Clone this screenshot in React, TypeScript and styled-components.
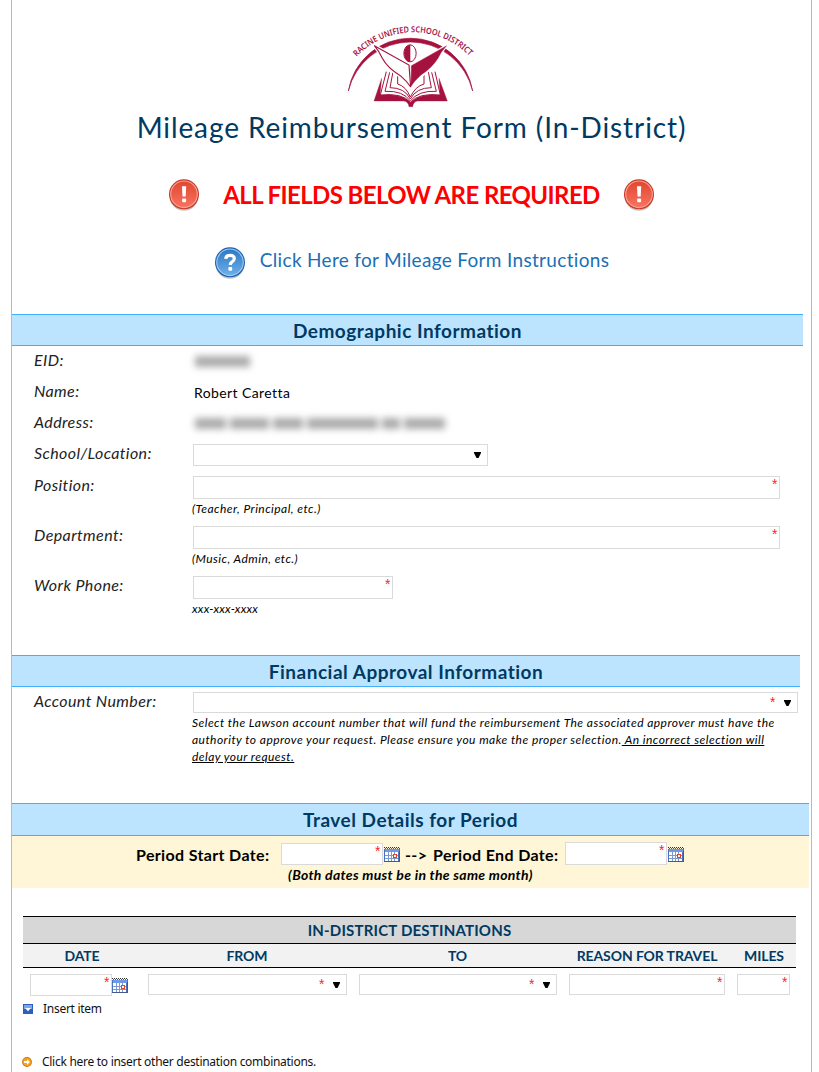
import React from 'react';
import styled, { createGlobalStyle } from 'styled-components';

const GlobalStyle = createGlobalStyle`
  *, *::before, *::after { box-sizing: border-box; }
  body { margin: 0; background: #fff; font-family: Lato, "Liberation Sans", sans-serif; color: #000; overflow: hidden; }
  svg { display: block; flex: none; }
`;

const Page = styled.main`
  width: 801px;
  height: 1072px;
  margin-left: 11px;
  border: solid #bababa;
  border-width: 0 1px;
  overflow: hidden;
`;

const Header = styled.header`
  display: flex;
  flex-direction: column;
  align-items: center;
  height: 314px;
  padding-top: 15px;
`;

const Title = styled.h1`
  margin: -7px 0 0;
  height: 38px;
  line-height: 38px;
  font-size: 28px;
  font-weight: 400;
  letter-spacing: 0.9px;
  color: #003a63;
  white-space: nowrap;
`;

const Notice = styled.div`
  display: flex;
  align-items: center;
  gap: 23px;
  height: 36px;
  margin-top: 31px;
`;

const NoticeText = styled.strong`
  font-size: 24px;
  line-height: 30px;
  font-weight: 700;
  letter-spacing: -0.6px;
  color: #f00;
  white-space: nowrap;
`;

const HelpLink = styled.a`
  display: flex;
  align-items: center;
  gap: 14px;
  height: 36px;
  margin-top: 32px;
  font-size: 19px;
  letter-spacing: 0.32px;
  color: #1a6fb5;
  white-space: nowrap;
  span { margin-top: -7px; }
`;

const SectionBar = styled.h2<{ $width: number; $height?: number }>`
  display: flex;
  align-items: center;
  justify-content: center;
  width: ${p => p.$width}px;
  height: ${p => p.$height ?? 32}px;
  margin: 0;
  border: solid #42b0f8;
  border-width: 1px 0;
  background: #bde4ff;
  color: #003a63;
  font-size: 19px;
  font-weight: 700;
  letter-spacing: 0.5px;
`;

const Fields = styled.div<{ $height: number }>`
  height: ${p => p.$height}px;
`;

const Row = styled.div<{ $height: number }>`
  display: grid;
  grid-template-columns: 159px 1fr;
  height: ${p => p.$height}px;
  padding-left: 22px;
`;

const Label = styled.label`
  height: 28px;
  line-height: 28px;
  font-size: 16px;
  font-style: italic;
  letter-spacing: 0.4px;
  color: #222;
  white-space: nowrap;
`;

const Value = styled.div`
  padding-left: 1px;
  line-height: 32px;
  font-size: 14px;
  letter-spacing: 0.4px;
`;

const Redacted = styled.div`
  display: flex;
  gap: 4px;
  padding: 10px 0 0 2px;
  filter: blur(3.5px);
`;

const Smudge = styled.i<{ $w: number }>`
  width: ${p => p.$w}px;
  height: 11px;
  background: #aaa;
`;

const FieldCell = styled.div`
  padding-top: 5px;
`;

const Box = styled.div<{ $w: number; $h: number; $select?: boolean; $top: number }>`
  display: flex;
  flex: none;
  justify-content: flex-end;
  align-items: ${p => (p.$select ? 'center' : 'flex-start')};
  gap: 8px;
  width: ${p => p.$w}px;
  height: ${p => p.$h}px;
  margin-top: ${p => p.$top}px;
  padding-right: ${p => (p.$select ? 6 : 1)}px;
  border: 1px solid #dadada;
  background: #fff;
`;

const Star = styled.span`
  width: 6px;
  height: 16px;
  font: 14px/14px "Liberation Sans", sans-serif;
  color: #f22;
`;

const Hint = styled.div<{ $spacing?: number }>`
  margin: 1px 0 0 -1px;
  line-height: 17px;
  font-size: 12px;
  font-style: italic;
  letter-spacing: ${p => p.$spacing ?? 0.46}px;
  white-space: nowrap;
`;

const Period = styled.section`
  width: 797px;
  height: 52px;
  background: #fef6d6;
`;

const PeriodLine = styled.div`
  display: flex;
  align-items: flex-start;
  height: 30px;
  padding: 6px 0 0 124px;
`;

const PeriodText = styled.strong<{ $w: number }>`
  flex: none;
  width: ${p => p.$w}px;
  line-height: 26px;
  font-size: 16px;
  letter-spacing: 0.35px;
  white-space: nowrap;
`;

const IconSlot = styled.span<{ $w: number; $top: number; $left?: number }>`
  flex: none;
  width: ${p => p.$w}px;
  padding: ${p => p.$top}px 0 0 ${p => p.$left ?? 0}px;
`;

const PeriodNote = styled.div`
  text-align: center;
  line-height: 18px;
  font-size: 14px;
  font-weight: 700;
  font-style: italic;
  letter-spacing: 0.3px;
`;

const Table = styled.section`
  width: 773px;
  margin: 28px 0 0 11px;
`;

const TableTitle = styled.div`
  height: 28px;
  border: solid #000;
  border-width: 1px 0;
  background: #d7d7d7;
  color: #003a63;
  text-align: center;
  font-size: 15px;
  line-height: 26px;
  font-weight: 700;
  letter-spacing: 0.2px;
`;

const HeadRow = styled.div`
  display: grid;
  grid-template-columns: 118px 212px 209px 170px 64px;
  height: 24px;
  border-bottom: 1px solid #000;
  background: #f2f2f2;
  color: #003a63;
  text-align: center;
  font-size: 14px;
  line-height: 24px;
  font-weight: 700;
  letter-spacing: -0.1px;
`;

const EntryRow = styled.div`
  display: flex;
  align-items: flex-start;
  height: 30px;
  padding: 6px 0 0 7px;
`;

const Gap = styled.span`
  flex: none;
  width: 12px;
`;

const Action = styled.a<{ $gap: number; $top: number; $indent: number }>`
  display: flex;
  align-items: center;
  gap: ${p => p.$gap}px;
  height: 16px;
  margin: ${p => p.$top}px 0 0 ${p => p.$indent}px;
  font-family: "Noto Sans", sans-serif;
  font-size: 12px;
  letter-spacing: -0.28px;
  color: #111;
  white-space: nowrap;
  span { margin-top: -2px; }
`;

const Logo = () => (
  <svg width="145" height="100" viewBox="0 0 435 300" fill="none" stroke="#a6123f">
    <path id="ring" d="M53 125A234 234 0 0 1 394 126" stroke="none" />
    <text fill="#a6123f" stroke="none" fontFamily="Noto Sans" fontSize="25" fontWeight="600">
      <textPath href="#ring" textLength="378" lengthAdjust="spacingAndGlyphs">RACINE UNIFIED SCHOOL DISTRICT</textPath>
    </text>
    <path d="M28 228A189 189 0 0 1 401 228A191.8 191.8 0 0 0 28 228Z" fill="#a6123f" strokeWidth="2" />
    <path d="M136 168L105 258H194Q209 260 215 277Q221 260 236 258H325L294 168L214 235Z" fill="#fff" stroke="#fff" strokeWidth="8" />
    <path d="M128 190L105 258H194Q208 260 210 275H221Q223 260 236 258H325L300 190L303 240Q240 234 216 262Q190 234 123 240Z" fill="#a6123f" strokeWidth="1" />
    <path d="M142 170L124 240Q190 233 214 262Q240 233 304 240L288 170" fill="#fff" strokeWidth="3" />
    <path d="M152 172L138 229Q192 226 214 258Q238 226 292 229L278 172M162 170L153 218Q197 218 214 252Q232 218 277 218L268 170" strokeWidth="3" />
    <path d="M176 178V207Q201 214 214 246Q229 214 255 207V178" fill="#fff" strokeWidth="3" />
    <path d="M104 91L208 148L215 218Q204 200 184 183Q146 160 130 130Q120 105 104 91Z" fill="#fff" stroke="#fff" strokeWidth="11" />
    <path d="M325 91L220 148L215 218Q226 200 246 183Q280 162 299 130Q309 105 325 91Z" fill="#a6123f" stroke="#fff" strokeWidth="8" />
    <path d="M106 92L210 150L215 216Q204 199 184 182Q146 160 130 130Q120 108 106 92Z" fill="#fff" strokeWidth="3.5" />
    <path d="M323 92L217 152L216 214Q226 198 246 180Q278 160 297 130Q307 108 323 92Z" fill="#a6123f" strokeWidth="1" />
    <ellipse cx="213" cy="115" rx="18.5" ry="25.5" fill="#fff" strokeWidth="3" />
    <path d="M214 89A19 26 0 0 0 214 141Z" fill="#a6123f" stroke="none" />
  </svg>
);

const Badge = ({ kind }: { kind: 'alert' | 'help' }) => {
  const alert = kind === 'alert';
  const id = `badge-${kind}`;
  return (
    <svg width="32" height="34" viewBox="0 0 32 34">
      <defs>
        <linearGradient id={id} x1="0" y1="0" x2="0" y2="1">
          <stop offset="0" stopColor={alert ? '#e2462f' : '#2e78c4'} />
          <stop offset="1" stopColor={alert ? '#f77460' : '#6db0e8'} />
        </linearGradient>
      </defs>
      <ellipse cx="16" cy="18" rx="14.5" ry="14.8" fill="#777" opacity=".45" />
      <circle cx="16" cy="16.3" r="15" fill={alert ? '#c73826' : '#1c5fae'} />
      <circle cx="16" cy="16.3" r="13.3" fill={`url(#${id})`} stroke={alert ? '#f7a697' : '#a3cef2'} strokeWidth="1.1" />
      {alert ? (
        <>
          <path d="M14 8.2h4.2l-.5 10.4h-3.2Z" fill="#fff" />
          <rect x="14.1" y="20.5" width="4" height="3.8" rx="1" fill="#fff" />
        </>
      ) : (
        <>
          <path d="M11.7 12.8Q12 9.4 16 9.4Q20.4 9.4 20.3 12.8Q20.2 14.8 17.8 16.1Q16.3 17 16.3 19" fill="none" stroke="#fff" strokeWidth="3.2" />
          <rect x="14.4" y="21" width="3.8" height="3.7" rx="1" fill="#fff" />
        </>
      )}
    </svg>
  );
};

const Calendar = () => (
  <svg width="16" height="15" viewBox="0 0 16 15" shapeRendering="crispEdges">
    <rect y="2" width="16" height="13" fill="#4a72bd" />
    <rect x="1" y="5" width="13" height="9" fill="#fff" />
    <rect x="1" y="2" width="14" height="3" fill="#6f98e6" />
    <path d="M0 .5H16" stroke="#333" strokeDasharray="1 1" />
    <path d="M1 1.5H16" stroke="#555" strokeDasharray="1 1" />
    <path d="M4.5 5V14M7.5 5V14M10.5 5V14M1 8.5H14M1 11.5H14" stroke="#7c9ad2" />
    <rect x="9.5" y="7.5" width="3" height="3" fill="#fff" stroke="#e8401c" />
    <path d="M15.5 4V15M0 14.5H16" stroke="#45598a" />
  </svg>
);

const Arrow = () => (
  <svg width="7" height="6" viewBox="0 0 7 6"><path d="M0 0H7V1L4.5 6H2.5L0 1Z" fill="#000" /></svg>
);

const InsertIcon = () => (
  <svg width="10" height="10" viewBox="0 0 10 10">
    <rect width="10" height="10" fill="#2c5fc0" />
    <rect x="1" y="1" width="8" height="4" fill="#7da5e8" />
    <path d="M2 4H8L5 7.2Z" fill="#fff" />
  </svg>
);

const GoIcon = () => (
  <svg width="10" height="10" viewBox="0 0 10 10">
    <circle cx="5" cy="5" r="4.9" fill="#c87512" />
    <circle cx="5" cy="5" r="4" fill="#f5a01e" />
    <path d="M2 4H5V2.2L8 5L5 7.8V6H2Z" fill="#fff" />
  </svg>
);

type InputProps = { w: number; h: number; top?: number; select?: boolean; required?: boolean };

const Input = ({ w, h, top = 0, select, required = true }: InputProps) => (
  <Box $w={w} $h={h} $top={top} $select={select}>
    {required && <Star>*</Star>}
    {select && <Arrow />}
  </Box>
);

export default function App() {
  return (
    <>
      <GlobalStyle />
      <Page>
        <Header>
          <Logo />
          <Title>Mileage Reimbursement Form (In-District)</Title>
          <Notice>
            <Badge kind="alert" />
            <NoticeText>ALL FIELDS BELOW ARE REQUIRED</NoticeText>
            <Badge kind="alert" />
          </Notice>
          <HelpLink>
            <Badge kind="help" />
            <span>Click Here for Mileage Form Instructions</span>
          </HelpLink>
        </Header>

        <SectionBar $width={791}>Demographic Information</SectionBar>
        <Fields $height={309}>
          <Row $height={31}>
            <Label>EID:</Label>
            <Redacted><Smudge $w={55} /></Redacted>
          </Row>
          <Row $height={31}>
            <Label>Name:</Label>
            <Value>Robert Caretta</Value>
          </Row>
          <Row $height={31}>
            <Label>Address:</Label>
            <Redacted>
              <Smudge $w={31} /><Smudge $w={39} /><Smudge $w={30} /><Smudge $w={71} /><Smudge $w={18} /><Smudge $w={41} />
            </Redacted>
          </Row>
          <Row $height={32}>
            <Label>School/Location:</Label>
            <FieldCell><Input w={295} h={22} select required={false} /></FieldCell>
          </Row>
          <Row $height={50}>
            <Label>Position:</Label>
            <FieldCell>
              <Input w={587} h={23} />
              <Hint>(Teacher, Principal, etc.)</Hint>
            </FieldCell>
          </Row>
          <Row $height={50}>
            <Label>Department:</Label>
            <FieldCell>
              <Input w={587} h={23} />
              <Hint>(Music, Admin, etc.)</Hint>
            </FieldCell>
          </Row>
          <Row $height={50}>
            <Label>Work Phone:</Label>
            <FieldCell>
              <Input w={200} h={23} />
              <Hint $spacing={0.25}>xxx-xxx-xxxx</Hint>
            </FieldCell>
          </Row>
        </Fields>

        <SectionBar $width={788}>Financial Approval Information</SectionBar>
        <Fields $height={116}>
          <Row $height={90}>
            <Label>Account Number:</Label>
            <FieldCell>
              <Input w={605} h={21} select />
              <Hint>
                Select the Lawson account number that will fund the reimbursement The associated approver must have the<br />
                authority to approve your request. Please ensure you make the proper selection.<u> An incorrect selection will</u><br />
                <u>delay your request.</u>
              </Hint>
            </FieldCell>
          </Row>
        </Fields>

        <SectionBar $width={797} $height={33}>Travel Details for Period</SectionBar>
        <Period>
          <PeriodLine>
            <PeriodText $w={145}>Period Start Date:</PeriodText>
            <Input w={102} h={22} top={1} />
            <IconSlot $w={22} $top={5} $left={1}><Calendar /></IconSlot>
            <PeriodText $w={28}>--&gt;</PeriodText>
            <PeriodText $w={132}>Period End Date:</PeriodText>
            <Input w={102} h={23} />
            <IconSlot $w={22} $top={5} $left={1}><Calendar /></IconSlot>
          </PeriodLine>
          <PeriodNote>(Both dates must be in the same month)</PeriodNote>
        </Period>

        <Table>
          <TableTitle>IN-DISTRICT DESTINATIONS</TableTitle>
          <HeadRow>
            <span>DATE</span><span>FROM</span><span>TO</span><span>REASON FOR TRAVEL</span><span>MILES</span>
          </HeadRow>
          <EntryRow>
            <Input w={82} h={22} />
            <IconSlot $w={36} $top={4}><Calendar /></IconSlot>
            <Input w={199} h={21} select />
            <Gap />
            <Input w={198} h={21} select />
            <Gap />
            <Input w={156} h={21} />
            <Gap />
            <Input w={53} h={21} />
          </EntryRow>
        </Table>
        <Action $gap={10} $top={3} $indent={11}><InsertIcon /><span>Insert item</span></Action>
        <Action $gap={10} $top={37} $indent={10}><GoIcon /><span>Click here to insert other destination combinations.</span></Action>
      </Page>
    </>
  );
}
